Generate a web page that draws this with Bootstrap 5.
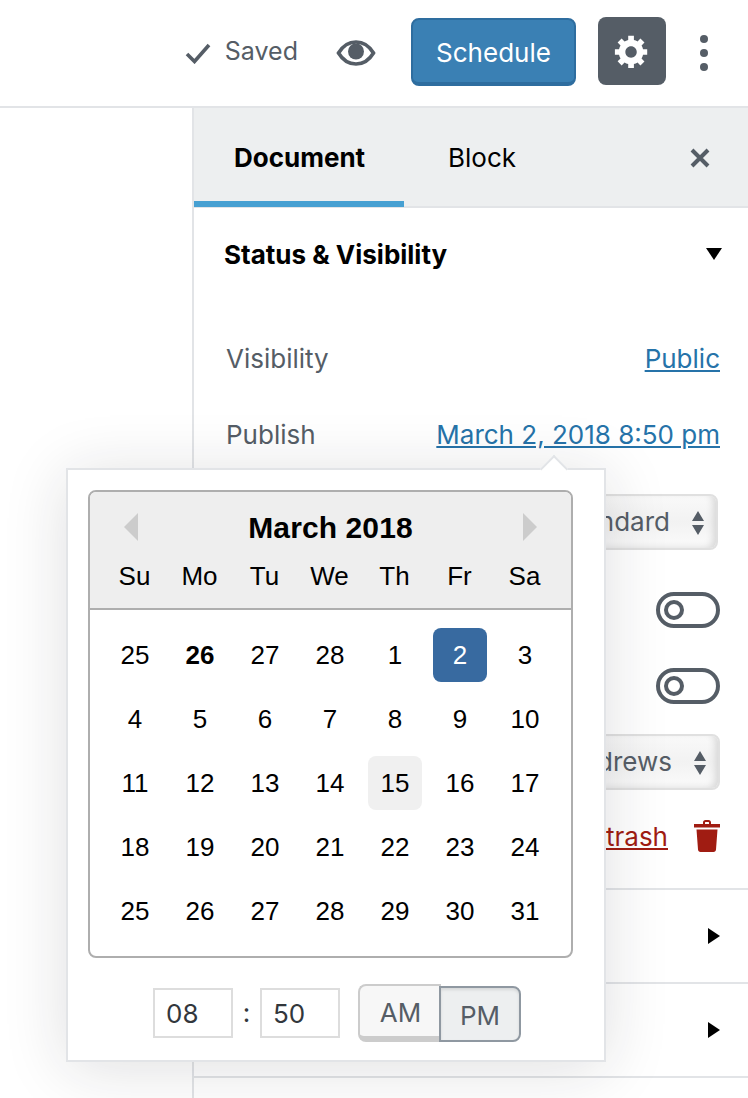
<!DOCTYPE html>
<html lang="en">
<head>
<meta charset="utf-8">
<title>Schedule post</title>
<link href="https://cdn.jsdelivr.net/npm/bootstrap@5.3.0/dist/css/bootstrap.min.css" rel="stylesheet">
<style>
html,body{height:1098px;overflow:hidden;background:#fff}
body{font-family:Inter,Roboto,"Liberation Sans",sans-serif;font-size:26px;color:#555d66;position:relative}
.topbar{height:108px;border-bottom:2px solid #e2e4e7;padding-right:38px}
.saved-state{margin-right:38px;gap:14px}
.saved-label{font-size:25px;margin-top:-3px}
.preview-ic{margin-right:35px}
.sched-btn{width:165px;height:68px;background:#3a80b4;border:2px solid #2e6d9f;border-bottom-width:4px;border-radius:8px;color:#fff;font-size:26px;padding:3px 0 0;margin-right:22px;margin-top:-2px;box-shadow:none}
.sched-btn:hover{background:#3a80b4;color:#fff;border-color:#2e6d9f}
.gear-btn{width:68px;height:68px;background:#555d66;border-radius:8px;margin-right:32px;margin-top:-4px}
.workspace{height:990px}
.sidepanel{margin-left:192px;border-left:2px solid #e2e4e7;height:990px;overflow:hidden}
.tabbar{height:100px;background:#edeff0;border-bottom:2px solid #e2e4e7;padding-right:38px}
.tabx{height:99px;padding:0 40px;color:#000;font-size:26px;line-height:1}
.tabx.on{font-weight:700;border-bottom:6px solid #46a0d2;width:210px;padding:6px 0 0 40px;white-space:nowrap}
.tabx.off{padding-left:44px;height:100px}
.close-ic{margin-top:40px}
.sect-head{height:94px;padding:0 26px 2px 30px;color:#000;font-weight:700}
.prop{padding:0 28px 2px 32px}
.h76{height:76px}.h98{height:98px}.h77{height:77px}
.gap19{height:19px}
.prop a{color:#2673a9}
.sel-row{padding-bottom:0}
.fake-select{height:56px;width:180px;border:2px solid #e0e0e0;border-radius:8px;padding:0 46px 2px 0;font-size:26px;color:#555d66;direction:rtl;box-shadow:inset -5px -2px 7px -2px #d8d8d8;background:linear-gradient(#f9f9f9,#f2f2f2 50%,#fbfbfb)}
.sel-wrap{position:relative}
.sel-ic{position:absolute;right:13px;top:17px;pointer-events:none}
.s-std{margin-right:2px}
.tgl{width:64px;height:36px;border:4px solid #555d66;border-radius:18px;position:relative}
.tgl::after{content:"";position:absolute;left:4px;top:4px;width:20px;height:20px;border:4px solid #555d66;border-radius:50%}
.trash-row{height:76px;margin-top:-2px;margin-bottom:14px;gap:26px}
.prop a.danger{color:#a01c12}
.acc{height:94px;border-top:2px solid #e2e4e7;padding-right:28px;color:#000}
.acc-end{height:22px}
.popbox{position:absolute;left:66px;top:468px;width:540px;height:594px;background:#fff;border:2px solid #e2e4e7;box-shadow:0 6px 60px rgba(25,30,35,.14);padding:20px 31px 0 20px;z-index:5}
.popbox::before{content:"";position:absolute;left:476px;top:-11px;width:20px;height:20px;background:#fff;border-left:2px solid #e2e4e7;border-top:2px solid #e2e4e7;transform:rotate(45deg)}
.calbox{height:468px;border:2px solid #aeaeae;border-radius:8px;overflow:hidden;font-family:"Liberation Sans",Arial,sans-serif;color:#000}
.calhead{height:118px;background:#eee;border-bottom:2px solid #aeaeae}
.calmonth{height:68px;padding:2px 34px 0;font-size:30px;font-weight:700;letter-spacing:.1px}
.wk,.dgrid{display:grid;grid-template-columns:repeat(7,65px);padding-left:12px}
.wk{font-size:26px;line-height:30px;margin-top:1px}
.wk span,.dgrid span{text-align:center}
.dgrid{grid-auto-rows:64px;margin-top:13px;font-size:26px}
.dgrid span{display:flex;align-items:center;justify-content:center;width:54px;height:54px;margin:5px 0 5px 6px;border-radius:8px}
.dgrid .today{font-weight:700}
.dgrid .sel{background:#386aa0;color:#fff}
.dgrid .hov{background:#f0f0f0}
.timerow{margin-top:26px;padding-left:65px}
.tinput{width:80px;height:50px;border:2px solid #ddd;background:#fff;padding:0 11px;font-size:26px;color:#32373c;font-family:Inter,Roboto,sans-serif;border-radius:0;outline:0}
.tcolon{width:27px;text-align:center;color:#32373c;line-height:1}
.ampm{margin-left:18px}
.ampm .btn{height:58px;font-size:26px;color:#555d66;padding:0;border-radius:8px}
.ampm .amb{width:83px;background:#f7f7f7;border:2px solid #ccc;border-bottom-width:6px;border-right:0;border-top-right-radius:0;border-bottom-right-radius:0;padding-top:2px}
.ampm .pmb{width:82px;margin-left:-2px;height:56px;margin-top:2px;padding-top:2px;background:#edeff0;border:2px solid #8f98a1;border-top-left-radius:0;border-bottom-left-radius:0;box-shadow:inset 0 2px 3px rgba(0,0,0,.1)}
</style>
</head>
<body>
<header class="topbar d-flex align-items-center justify-content-end">
  <div class="saved-state d-flex align-items-center">
    <svg width="26" height="22" viewBox="0 0 26 22" aria-hidden="true"><path d="M2 12l7.500 7.500L24 3" fill="none" stroke="#555d66" stroke-width="3.600"/></svg>
    <span class="saved-label">Saved</span>
  </div>
  <svg class="preview-ic" width="40" height="28" viewBox="0 0 40 28" aria-hidden="true"><path d="M2.500 14C7 6.500 13 3 20 3s13 3.500 17.500 11C33 21.500 27 25 20 25S7 21.500 2.500 14z" fill="none" stroke="#555d66" stroke-width="3.600"/><circle cx="20" cy="12.500" r="8" fill="#555d66"/></svg>
  <button type="button" class="btn sched-btn">Schedule</button>
  <div class="gear-btn d-flex align-items-center justify-content-center">
    <svg width="38" height="38" viewBox="0 0 20 20" aria-hidden="true"><path fill="#fff" d="M18 12h-2.180c-.17.7-.44 1.350-.81 1.930l1.540 1.540-2.100 2.100-1.540-1.540c-.58.36-1.230.63-1.910.79V19H8v-2.180c-.68-.16-1.330-.43-1.910-.79l-1.540 1.540-2.120-2.120 1.540-1.540c-.36-.58-.63-1.230-.79-1.910H1V9.030h2.170c.16-.7.44-1.350.8-1.940L2.430 5.550l2.100-2.100 1.540 1.540c.58-.37 1.240-.64 1.930-.81V2h3v2.180c.68.16 1.330.43 1.910.79l1.540-1.540 2.120 2.120-1.540 1.540c.36.59.64 1.240.8 1.940H18V12zm-8.500 1.500c1.660 0 3-1.340 3-3s-1.340-3-3-3-3 1.340-3 3 1.340 3 3 3z"/></svg>
  </div>
  <svg width="12" height="38" viewBox="0 0 12 38" aria-hidden="true"><circle cx="6" cy="5" r="4" fill="#555d66"/><circle cx="6" cy="19" r="4" fill="#555d66"/><circle cx="6" cy="33" r="4" fill="#555d66"/></svg>
</header>

<main class="workspace">
  <aside class="sidepanel">
    <div class="tabbar d-flex align-items-start">
      <div class="tabx on d-flex align-items-center">Document</div>
      <div class="tabx off d-flex align-items-center">Block</div>
      <svg class="ms-auto close-ic" width="20" height="20" viewBox="0 0 20 20" aria-hidden="true"><path d="M2 2l16 16M18 2L2 18" stroke="#555d66" stroke-width="4" fill="none"/></svg>
    </div>
    <div class="sect-head d-flex align-items-center justify-content-between">
      <span>Status &amp; Visibility</span>
      <svg width="16" height="12" viewBox="0 0 16 12" aria-hidden="true"><path d="M0 0h16L8 12z" fill="#000"/></svg>
    </div>
    <div class="gap19"></div>
    <div class="prop h76 d-flex align-items-center justify-content-between"><span>Visibility</span><a href="#">Public</a></div>
    <div class="prop h76 d-flex align-items-center justify-content-between"><span>Publish</span><a href="#">March 2, 2018 8:50 pm</a></div>
    <div class="prop sel-row h98 d-flex align-items-center justify-content-end">
      <div class="sel-wrap s-std"><div class="fake-select d-flex align-items-center justify-content-start"><bdi>Standard</bdi></div><svg class="sel-ic" width="14" height="24" viewBox="0 0 14 24" aria-hidden="true"><path d="M7 0l6 10H1zM1 14h12L7 24z" fill="#555d66"/></svg></div>
    </div>
    <div class="prop sel-row h77 d-flex align-items-center justify-content-end"><div class="tgl"></div></div>
    <div class="prop sel-row h76 d-flex align-items-center justify-content-end"><div class="tgl"></div></div>
    <div class="prop sel-row h76 d-flex align-items-center justify-content-end">
      <div class="sel-wrap"><div class="fake-select d-flex align-items-center justify-content-start"><bdi>Andrews</bdi></div><svg class="sel-ic" width="14" height="24" viewBox="0 0 14 24" aria-hidden="true"><path d="M7 0l6 10H1zM1 14h12L7 24z" fill="#555d66"/></svg></div>
    </div>
    <div class="prop trash-row sel-row d-flex align-items-center justify-content-end"><a class="danger" href="#">Move to trash</a>
      <svg width="26" height="32" viewBox="0 0 26 32" aria-hidden="true"><path fill="#a01c12" fill-rule="evenodd" d="M9 4V2.500C9 1 10 0 11.500 0h3C16 0 17 1 17 2.500V4h9v3.500H0V4zM11 4h4V2.500c0-.3-.2-.5-.5-.5h-3c-.3 0-.5.2-.5.5zM2.500 9.500h21L22 29.500c-.1 1.500-1 2.500-2.500 2.500h-13C5 32 4.100 31 4 29.500z"/></svg>
    </div>
    <div class="acc d-flex align-items-center justify-content-end"><svg width="12" height="16" viewBox="0 0 12 16" aria-hidden="true"><path d="M0 0l12 8-12 8z" fill="#000"/></svg></div>
    <div class="acc d-flex align-items-center justify-content-end"><svg width="12" height="16" viewBox="0 0 12 16" aria-hidden="true"><path d="M0 0l12 8-12 8z" fill="#000"/></svg></div>
    <div class="acc acc-end"></div>
  </aside>
</main>

<section class="popbox">
  <div class="calbox">
    <div class="calhead">
      <div class="calmonth d-flex align-items-center justify-content-between">
        <svg width="14" height="28" viewBox="0 0 14 28" aria-hidden="true"><path d="M14 0v28L0 14z" fill="#ccc"/></svg>
        <span>March 2018</span>
        <svg width="14" height="28" viewBox="0 0 14 28" aria-hidden="true"><path d="M0 0v28l14-14z" fill="#ccc"/></svg>
      </div>
      <div class="wk"><span>Su</span><span>Mo</span><span>Tu</span><span>We</span><span>Th</span><span>Fr</span><span>Sa</span></div>
    </div>
    <div class="dgrid">
      <span>25</span><span class="today">26</span><span>27</span><span>28</span><span>1</span><span class="sel">2</span><span>3</span>
      <span>4</span><span>5</span><span>6</span><span>7</span><span>8</span><span>9</span><span>10</span>
      <span>11</span><span>12</span><span>13</span><span>14</span><span class="hov">15</span><span>16</span><span>17</span>
      <span>18</span><span>19</span><span>20</span><span>21</span><span>22</span><span>23</span><span>24</span>
      <span>25</span><span>26</span><span>27</span><span>28</span><span>29</span><span>30</span><span>31</span>
    </div>
  </div>
  <div class="timerow d-flex align-items-center">
    <input class="tinput" type="text" value="08" aria-label="Hours">
    <span class="tcolon">:</span>
    <input class="tinput" type="text" value="50" aria-label="Minutes">
    <div class="ampm d-flex align-items-start">
      <button type="button" class="btn amb">AM</button>
      <button type="button" class="btn pmb">PM</button>
    </div>
  </div>
</section>
</body>
</html>
